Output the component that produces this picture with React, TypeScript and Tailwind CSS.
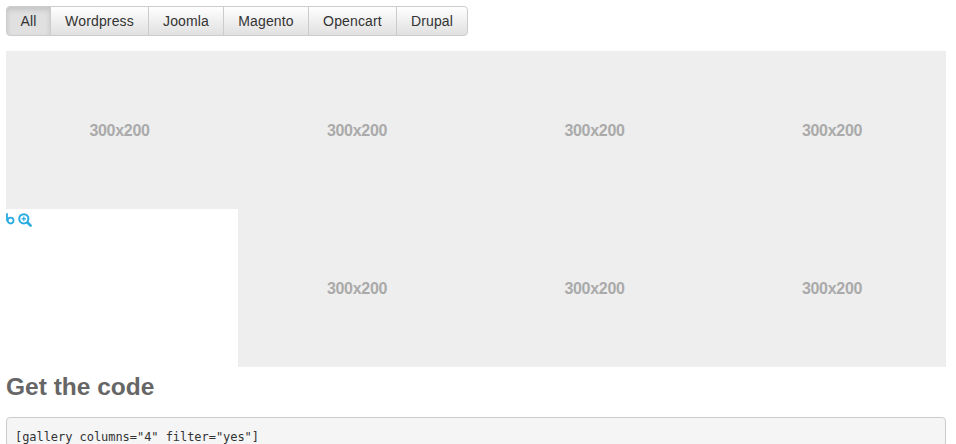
import React from "react";

const tabs = [
  { label: "All", cls: "w-[45px] rounded-l bg-[#e0e0e0] shadow-[inset_0_3px_5px_rgba(0,0,0,0.125)]" },
  { label: "Wordpress", cls: "-ml-px w-[99px] bg-gradient-to-b from-white to-[#e0e0e0]" },
  { label: "Joomla", cls: "-ml-px w-[76px] bg-gradient-to-b from-white to-[#e0e0e0]" },
  { label: "Magento", cls: "-ml-px w-[86px] bg-gradient-to-b from-white to-[#e0e0e0]" },
  { label: "Opencart", cls: "-ml-px w-[89px] bg-gradient-to-b from-white to-[#e0e0e0]" },
  { label: "Drupal", cls: "-ml-px w-[72px] rounded-r bg-gradient-to-b from-white to-[#e0e0e0]" },
];

function Placeholder() {
  return (
    <div className="flex h-[158px] items-center justify-center bg-[#eeeeee] pt-[2px] text-[16px] font-bold tracking-[-0.3px] text-[#aaaaaa]">
      300x200
    </div>
  );
}

export default function App() {
  return (
    <div className="h-[444px] w-[956px] overflow-hidden bg-white px-[6px] pt-[6px] font-['Liberation_Sans',Arial,sans-serif]">
      <div className="flex h-[30px] w-max">
        {tabs.map((t) => (
          <button
            key={t.label}
            className={"h-[30px] border border-[#cccccc] text-[14px] leading-5 tracking-[0.15px] text-[#333333] " + t.cls}
          >
            {t.label}
          </button>
        ))}
      </div>

      <div className="mt-[15px] w-[940px] overflow-hidden">
        <div className="-ml-[5.25px] grid w-[950px] grid-cols-4">
          <Placeholder />
          <Placeholder />
          <Placeholder />
          <Placeholder />
          <div className="flex h-[158px] items-start pl-[5.25px] pt-[4px] text-[#29abe2]">
            <svg width="9" height="12" viewBox="0 0 9 12" fill="none" stroke="currentColor" strokeWidth="1.8" strokeLinecap="round" className="shrink-0">
              <path d="M1 1 L1 7.5" />
              <circle cx="4.6" cy="7.6" r="2.9" />
            </svg>
            <svg width="14" height="14" viewBox="0 0 14 14" fill="none" stroke="currentColor" className="ml-[3px] shrink-0">
              <circle cx="5.8" cy="5.8" r="4.6" strokeWidth="2" />
              <path d="M9.5 9.5 L12.6 12.6" strokeWidth="2.6" strokeLinecap="round" />
              <path d="M3.6 5.8 H8 M5.8 3.6 V8" strokeWidth="1.2" />
            </svg>
          </div>
          <Placeholder />
          <Placeholder />
          <Placeholder />
        </div>
      </div>

      <h2 className="mt-[6px] text-[24.5px] font-bold leading-[28px] text-[#666666]">Get the code</h2>

      <pre className="mt-[16px] w-[940px] rounded border border-[#cccccc] bg-[#f5f5f5] pl-[8px] pt-[9.5px] font-['DejaVu_Sans_Mono',monospace] text-[12px] leading-[18px] tracking-[-0.05px] text-[#333333]">
        [gallery columns="4" filter="yes"]
      </pre>
    </div>
  );
}
